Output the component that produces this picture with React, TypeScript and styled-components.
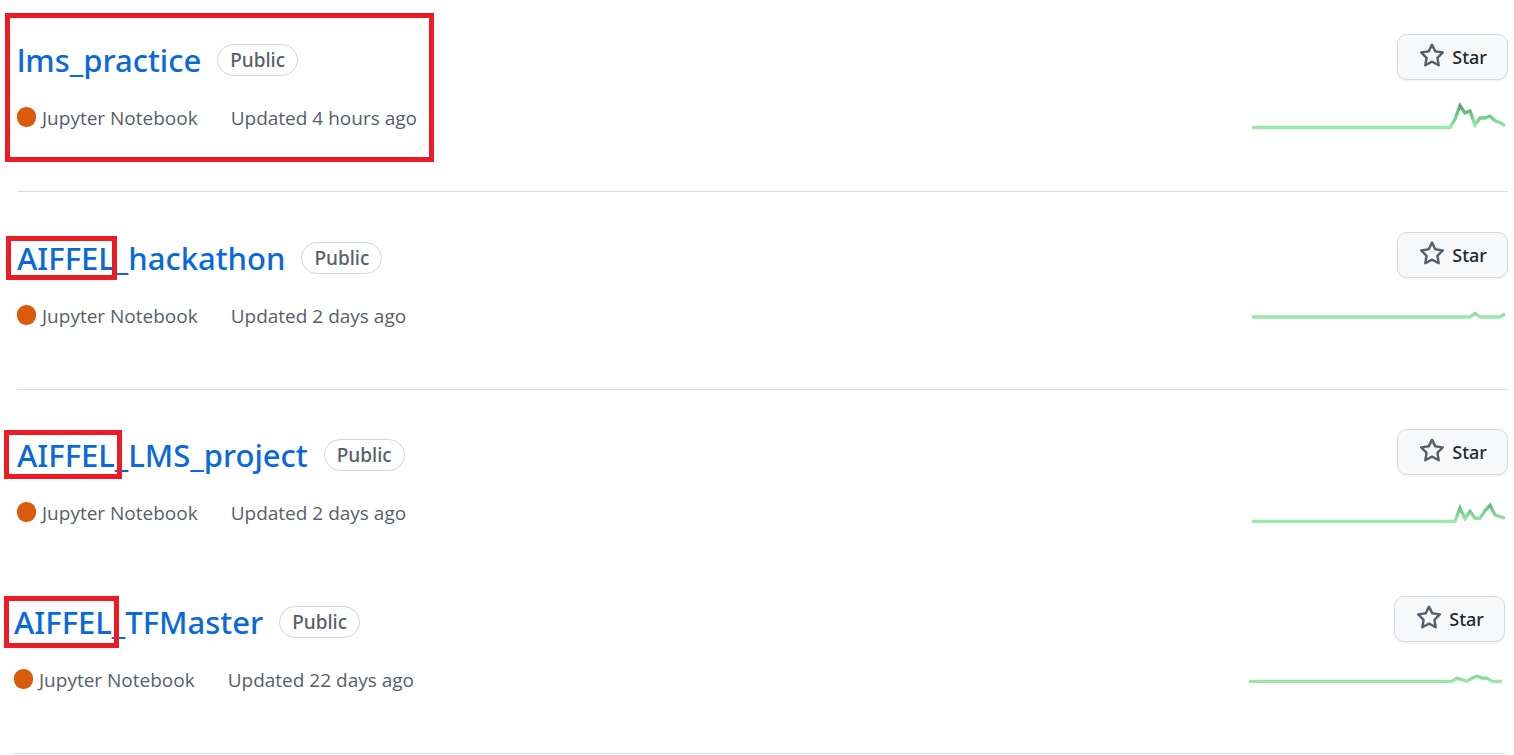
import React from "react";
import styled, { createGlobalStyle } from "styled-components";

const GlobalStyle = createGlobalStyle`
  *, *::before, *::after { box-sizing: border-box; }
  body {
    margin: 0;
    background: #ffffff;
    color: #24292f;
    font-family: "Noto Sans", "Open Sans", sans-serif;
  }
`;

const Page = styled.main`
  position: relative;
  overflow: hidden;
`;

const RepoList = styled.ul<{ $inset: number }>`
  list-style: none;
  margin: 0;
  padding: 0 ${(p) => 23 - p.$inset}px 0 ${(p) => p.$inset}px;
`;

const RepoItem = styled.li<{ $top: number; $cut?: boolean }>`
  display: flex;
  justify-content: space-between;
  padding-top: ${(p) => p.$top}px;
  padding-bottom: ${(p) => (p.$cut ? 31 : 61)}px;
  border-bottom: ${(p) => (p.$cut ? "none" : "1px solid #d8dee4")};
`;

const Summary = styled.div`
  display: flex;
  flex-direction: column;
  gap: 20px;
`;

const Heading = styled.div`
  display: flex;
  align-items: center;
  gap: 16px;
  height: 52px;
`;

const Title = styled.h3`
  margin: 0;
  font-size: 31px;
  font-weight: 500;
  line-height: 40px;
`;

const RepoLink = styled.a`
  color: #0969da;
  text-decoration: none;
`;

const Badge = styled.span`
  padding: 0 12px;
  border: 1px solid #d0d7de;
  border-radius: 16px;
  color: #57606a;
  font-size: 19px;
  font-weight: 500;
  line-height: 30px;
`;

const Meta = styled.div`
  display: flex;
  gap: 33px;
  color: #57606a;
  font-family: "Open Sans", "Noto Sans", sans-serif;
  font-size: 19px;
  line-height: 24px;
`;

const Language = styled.span`
  display: flex;
  align-items: flex-start;
  gap: 6px;
`;

const LanguageDot = styled.span`
  width: 19px;
  height: 20px;
  margin-top: 1px;
  border-radius: 9px;
  background: #da5b0b;
`;

const Aside = styled.div`
  display: flex;
  flex-direction: column;
  align-items: flex-end;
  gap: 10px;
`;

const StarButton = styled.button`
  display: flex;
  align-items: center;
  gap: 7px;
  height: 46px;
  padding: 0 20px 0 21px;
  border: 1px solid #d5d8da;
  border-radius: 10px;
  background: #f6f8fa;
  box-shadow: 0 2px 0 rgba(27, 31, 36, 0.04);
  color: #24292f;
  font-family: inherit;
  font-size: 18px;
  font-weight: 500;
  line-height: 26px;
  cursor: pointer;
`;

const StarIcon = styled.svg`
  width: 26px;
  height: 26px;
  margin-bottom: 2px;
  fill: #57606a;
`;

const Graph = styled.svg`
  display: block;
  width: 256px;
  height: 40px;
`;

const Highlight = styled.div<{ $x: number; $y: number; $w: number; $h: number }>`
  position: absolute;
  left: ${(p) => p.$x}px;
  top: ${(p) => p.$y}px;
  width: ${(p) => p.$w}px;
  height: ${(p) => p.$h}px;
  border: 5px solid #ed1c24;
  pointer-events: none;
`;

interface Repo {
  name: string;
  updated: string;
  activity: string;
  baseline: number;
  top: number;
  cut?: boolean;
}

const recent: Repo[] = [
  {
    name: "lms_practice",
    updated: "Updated 4 hours ago",
    activity: "0,37.5 198,37.5 203,29 208,15.7 213,23 218,21 223,35 228,28 233,28 238,26.3 243,30.7 248,32.7 253,36",
    baseline: 37,
    top: 34,
  },
  {
    name: "AIFFEL_hackathon",
    updated: "Updated 2 days ago",
    activity: "0,29 218,29 223,25.5 228,29 248,29 253,26",
    baseline: 29,
    top: 40,
  },
  {
    name: "AIFFEL_LMS_project",
    updated: "Updated 2 days ago",
    activity: "0,36.3 203,36.3 208,23 213,33.7 218,26.3 223,33.3 228,33.3 233,25.7 238,20.3 243,30 253,33.3",
    baseline: 36,
    top: 39,
    cut: true,
  },
];

const older: Repo[] = [
  {
    name: "AIFFEL_TFMaster",
    updated: "Updated 22 days ago",
    activity: "0,29.3 203,29.3 208,26.3 218,29.3 223,26.3 228,24.3 233,26 238,26.3 243,29.3 253,29.3",
    baseline: 30,
    top: 40,
  },
];

function RepoRow({ repo }: { repo: Repo }) {
  const gradient = `activity-${repo.name}`;
  return (
    <RepoItem $top={repo.top} $cut={repo.cut}>
      <Summary>
        <Heading>
          <Title>
            <RepoLink href={`#${repo.name}`}>{repo.name}</RepoLink>
          </Title>
          <Badge>Public</Badge>
        </Heading>
        <Meta>
          <Language>
            <LanguageDot />
            Jupyter Notebook
          </Language>
          <span>{repo.updated}</span>
        </Meta>
      </Summary>
      <Aside>
        <StarButton type="button">
          <StarIcon viewBox="0 0 16 16" aria-hidden="true">
            <path
              fillRule="evenodd"
              d="M8 .25a.75.75 0 01.673.418l1.882 3.815 4.21.612a.75.75 0 01.416 1.279l-3.046 2.97.719 4.192a.75.75 0 01-1.088.791L8 12.347l-3.766 1.98a.75.75 0 01-1.088-.79l.72-4.194L.818 6.374a.75.75 0 01.416-1.28l4.21-.611L7.327.668A.75.75 0 018 .25zm0 2.445L6.615 5.5a.75.75 0 01-.564.41l-3.097.45 2.24 2.184a.75.75 0 01.216.664l-.528 3.084 2.769-1.456a.75.75 0 01.698 0l2.77 1.456-.53-3.084a.75.75 0 01.216-.664l2.24-2.183-3.096-.45a.75.75 0 01-.564-.41L8 2.694z"
            />
          </StarIcon>
          Star
        </StarButton>
        <Graph viewBox="0 0 256 40" aria-hidden="true">
          <defs>
            <linearGradient
              id={gradient}
              gradientUnits="userSpaceOnUse"
              x1="0"
              y1={repo.baseline}
              x2="0"
              y2={repo.baseline - 23}
            >
              <stop offset="0" stopColor="#9be9a8" />
              <stop offset="0.35" stopColor="#77d48f" />
              <stop offset="1" stopColor="#5a9f70" />
            </linearGradient>
          </defs>
          <polyline points={repo.activity} fill="none" stroke={`url(#${gradient})`} strokeWidth="3.3" />
        </Graph>
      </Aside>
    </RepoItem>
  );
}

export default function App() {
  return (
    <>
      <GlobalStyle />
      <Page>
        <RepoList $inset={17}>
          {recent.map((repo) => (
            <RepoRow key={repo.name} repo={repo} />
          ))}
        </RepoList>
        <RepoList $inset={14}>
          {older.map((repo) => (
            <RepoRow key={repo.name} repo={repo} />
          ))}
        </RepoList>
        <Highlight $x={5} $y={13} $w={429} $h={149} />
        <Highlight $x={6} $y={236} $w={111} $h={44} />
        <Highlight $x={4} $y={430} $w={118} $h={49} />
        <Highlight $x={4} $y={596} $w={115} $h={52} />
      </Page>
    </>
  );
}
